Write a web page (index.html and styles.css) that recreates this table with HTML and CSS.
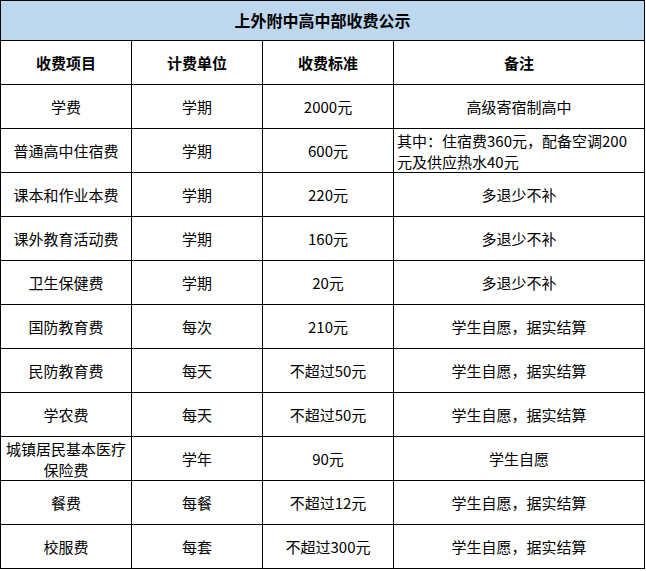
FILE: index.html
```html
<!DOCTYPE html>
<html lang="zh-CN">
<head>
<meta charset="utf-8">
<title>上外附中高中部收费公示</title>
<link rel="stylesheet" href="styles.css">
</head>
<body>
<table class="fees">
  <colgroup>
    <col class="c1"><col class="c2"><col class="c3"><col class="c4">
  </colgroup>
  <thead>
    <tr class="title-row"><th colspan="4">上外附中高中部收费公示</th></tr>
    <tr class="head-row"><th>收费项目</th><th>计费单位</th><th>收费标准</th><th>备注</th></tr>
  </thead>
  <tbody>
    <tr><td>学费</td><td>学期</td><td>2000元</td><td>高级寄宿制高中</td></tr>
    <tr><td>普通高中住宿费</td><td>学期</td><td>600元</td><td class="left">其中：住宿费360元，配备空调200<br>元及供应热水40元</td></tr>
    <tr><td>课本和作业本费</td><td>学期</td><td>220元</td><td>多退少不补</td></tr>
    <tr><td>课外教育活动费</td><td>学期</td><td>160元</td><td>多退少不补</td></tr>
    <tr><td>卫生保健费</td><td>学期</td><td>20元</td><td>多退少不补</td></tr>
    <tr><td>国防教育费</td><td>每次</td><td>210元</td><td>学生自愿，据实结算</td></tr>
    <tr><td>民防教育费</td><td>每天</td><td>不超过50元</td><td>学生自愿，据实结算</td></tr>
    <tr><td>学农费</td><td>每天</td><td>不超过50元</td><td>学生自愿，据实结算</td></tr>
    <tr><td>城镇居民基本医疗<br>保险费</td><td>学年</td><td>90元</td><td>学生自愿</td></tr>
    <tr><td>餐费</td><td>每餐</td><td>不超过12元</td><td>学生自愿，据实结算</td></tr>
    <tr><td>校服费</td><td>每套</td><td>不超过300元</td><td>学生自愿，据实结算</td></tr>
  </tbody>
</table>
</body>
</html>
```
FILE: styles.css
```css
html, body {
  margin: 0;
  padding: 0;
  background: #ffffff;
}
body {
  font-family: "Noto Sans CJK SC", "Microsoft YaHei", sans-serif;
  font-size: 15px;
  color: #000000;
}
.fees {
  border-collapse: collapse;
  table-layout: fixed;
  width: 644px;
}
.c1, .c2, .c3 { width: 131px; }
.c4 { width: 251px; }
.fees th, .fees td {
  border: 1px solid #000000;
  text-align: center;
  vertical-align: middle;
  padding: 0 2px;
  line-height: 21px;
  box-sizing: border-box;
  overflow: hidden;
  white-space: nowrap;
}
.title-row th {
  background: #bdd7ee;
  font-size: 16px;
  font-weight: bold;
  height: 40px;
}
.head-row th {
  font-weight: bold;
  height: 44px;
}
.fees td { height: 44px; }
.fees td.left { text-align: left; padding-left: 3px; }
```
